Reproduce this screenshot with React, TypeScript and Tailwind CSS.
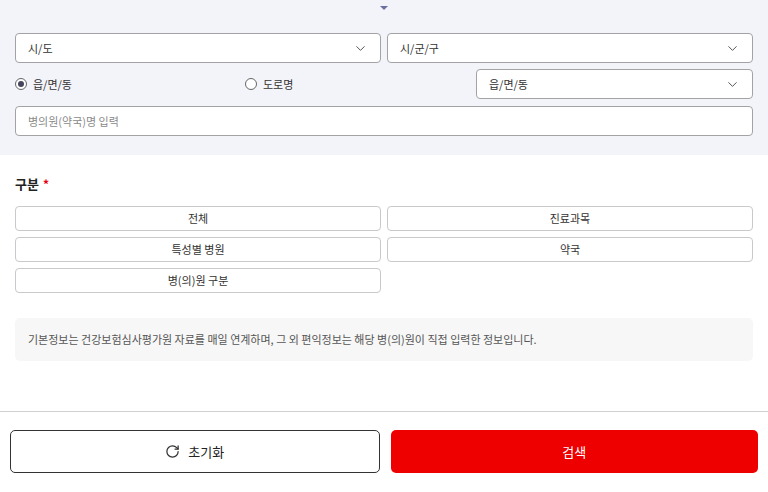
import React from "react";
import { ChevronDown, RotateCw } from "lucide-react";

const font = { fontFamily: '"Noto Sans CJK KR", "Noto Sans", sans-serif' };

function Select({ label, className = "" }: { label: string; className?: string }) {
  return (
    <div
      className={`flex items-center justify-between h-[30px] bg-white border border-[#a3a3a6] rounded-[4px] pl-[12px] pr-[12px] ${className}`}
    >
      <span className="text-[11px] text-[#333]">{label}</span>
      <ChevronDown size={15} strokeWidth={1.6} className="text-[#555]" />
    </div>
  );
}

function Radio({ checked, label }: { checked?: boolean; label: string }) {
  return (
    <div className="flex items-center gap-[6px]">
      <span className="w-[12px] h-[12px] rounded-full border border-[#666] bg-white flex items-center justify-center">
        {checked && <span className="w-[6px] h-[6px] rounded-full bg-[#45465a]" />}
      </span>
      <span className="text-[11px] text-[#333]">{label}</span>
    </div>
  );
}

function Chip({ label }: { label: string }) {
  return (
    <div className="h-[25px] flex items-center justify-center bg-white border border-[#c9c9cc] rounded-[4px] text-[11px] text-[#333]">
      {label}
    </div>
  );
}

export default function App() {
  return (
    <div className="w-[768px] h-[492px] bg-white flex flex-col overflow-hidden" style={font}>
      <div className="bg-[#f3f4f9] px-[15px] pt-[6px] pb-[19px]">
        <div className="flex justify-center h-[27px]">
          <div className="w-0 h-0 border-l-[4px] border-r-[4px] border-t-[4px] border-l-transparent border-r-transparent border-t-[#6c6fa3]" />
        </div>
        <div className="grid grid-cols-2 gap-[6px]">
          <Select label="시/도" />
          <Select label="시/군/구" />
        </div>
        <div className="flex items-center mt-[6px]">
          <div className="w-[230px]">
            <Radio checked label="읍/면/동" />
          </div>
          <div className="flex-1">
            <Radio label="도로명" />
          </div>
          <Select label="읍/면/동" className="w-[277px]" />
        </div>
        <div className="mt-[7px] h-[30px] bg-white border border-[#a3a3a6] rounded-[4px] flex items-center pl-[12px]">
          <span className="text-[11px] text-[#8a8a8a]">병의원(약국)명 입력</span>
        </div>
      </div>

      <div className="px-[15px] pt-[20px]">
        <div className="flex items-center gap-[4px] h-[18px]">
          <span className="text-[13px] font-bold text-[#222]">구분</span>
          <span className="text-[12px] font-bold text-[#e60012] leading-none">*</span>
        </div>
        <div className="grid grid-cols-2 gap-x-[6px] gap-y-[6px] mt-[13px]">
          <Chip label="전체" />
          <Chip label="진료과목" />
          <Chip label="특성별 병원" />
          <Chip label="약국" />
          <Chip label="병(의)원 구분" />
        </div>
        <div className="mt-[25px] h-[43px] bg-[#f7f7f7] rounded-[5px] flex items-center px-[13px]">
          <span className="text-[11px] text-[#555]">
            기본정보는 건강보험심사평가원 자료를 매일 연계하며, 그 외 편익정보는 해당 병(의)원이 직접 입력한 정보입니다.
          </span>
        </div>
      </div>

      <div className="mt-[50px] border-t border-[#d0d0d0]" />
      <div className="flex gap-[11px] px-[10px] pt-[18px]">
        <button className="flex-1 h-[43px] bg-white border border-[#333] rounded-[5px] flex items-center justify-center gap-[8px]">
          <RotateCw size={15} strokeWidth={2} className="text-[#333]" />
          <span className="text-[13px] text-[#222]">초기화</span>
        </button>
        <button className="flex-1 h-[43px] bg-[#ef0000] rounded-[5px] flex items-center justify-center">
          <span className="text-[13px] text-white">검색</span>
        </button>
      </div>
    </div>
  );
}
